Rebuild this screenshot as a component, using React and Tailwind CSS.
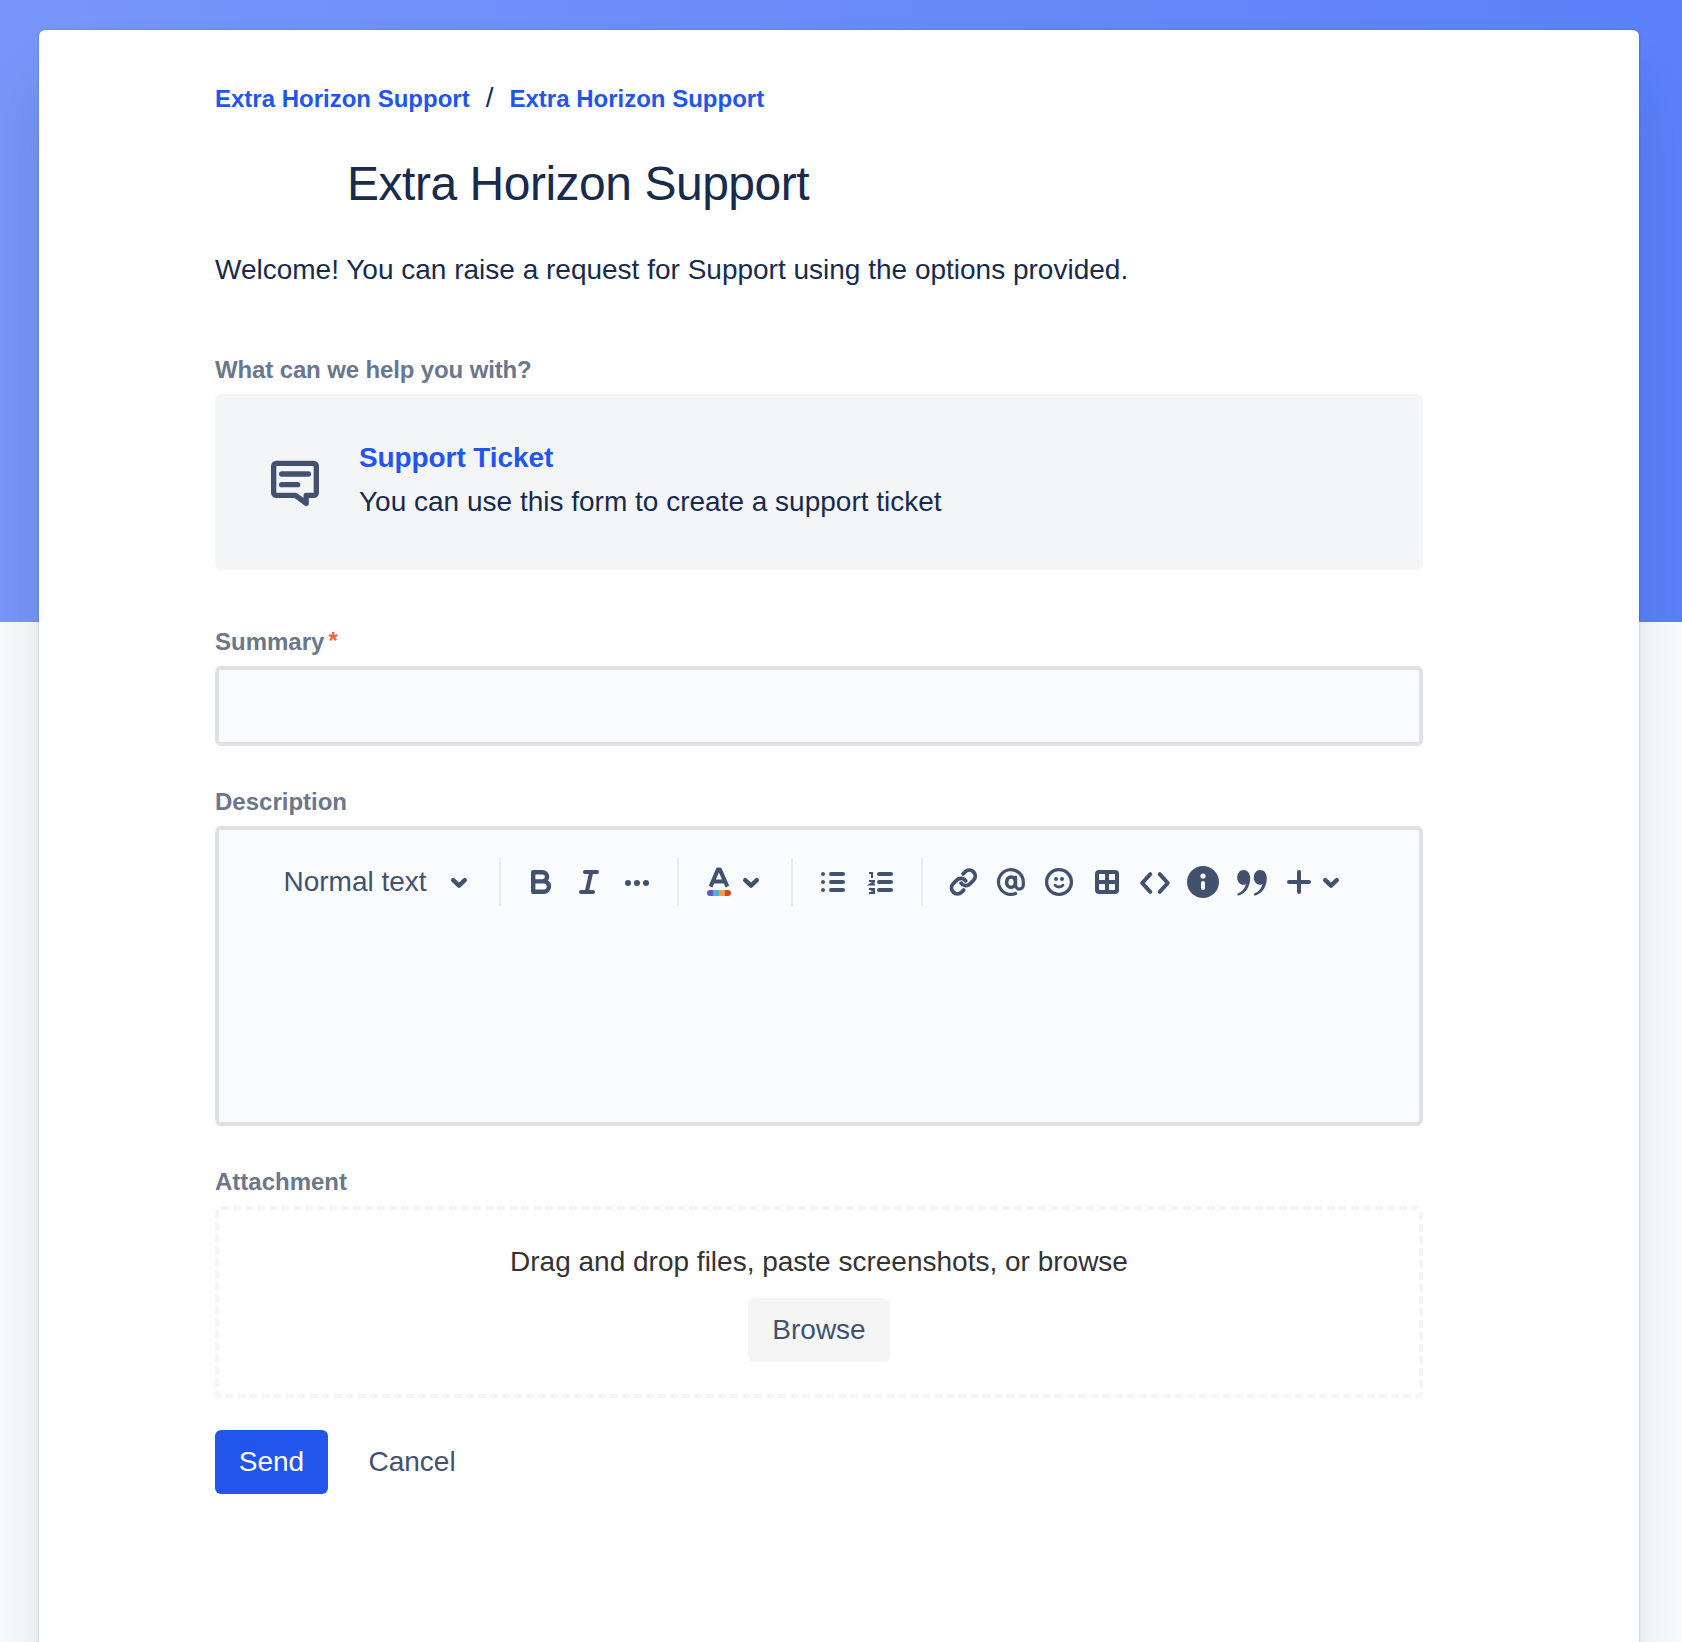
function Icon({ children, className = "w-12" }) {
  return (
    <svg viewBox="0 0 48 48" className={`h-12 shrink-0 ${className}`} fill="none" stroke="#42526E" strokeWidth="4" strokeLinecap="round" strokeLinejoin="round">
      {children}
    </svg>
  );
}

function Chevron() {
  return (
    <Icon>
      <path d="M18.2 22.2L24 27.6L29.8 22.2" strokeWidth="4.4" />
    </Icon>
  );
}

function SmallChevron() {
  return (
    <svg viewBox="8 0 32 48" className="-ml-2 mr-2 h-12 w-8 shrink-0" fill="none" stroke="#42526E" strokeWidth="4.4" strokeLinecap="round" strokeLinejoin="round">
      <path d="M18.2 22.2L24 27.6L29.8 22.2" />
    </svg>
  );
}

function Divider() {
  return <div className="mx-4 h-12 w-0.5 shrink-0 bg-[#EBECF0]" />;
}

function Label({ children, className = "" }) {
  return <div className={`mb-2 h-8 text-2xl leading-8 font-bold text-[#6B778C] ${className}`}>{children}</div>;
}

const QUOTE = "M16.4 12c4.2 0 6.8 3.4 6.8 8.2 0 8.6-5 15.4-11.4 17.2-1.7.4-2.1-1.5-.6-2.1 4.2-1.8 6.8-5 7.7-9-.8.3-1.7.5-2.5.5-3.6 0-6.2-3.2-6.2-7.3 0-4.3 2.7-7.5 6.2-7.5z";

function Toolbar() {
  return (
    <div className="flex h-12 items-center">
      <div className="w-[151.5px] shrink-0 whitespace-nowrap text-[28px] leading-10 text-[#42526E]">Normal text</div>
      <Chevron />
      <Divider />
      <Icon>
        <path d="M16.2 14.2H25.5a4.6 4.6 0 0 1 0 9.2H16.2M25.5 23.4h1.2a5.2 5.2 0 0 1 0 10.4H16.2V14.2" strokeWidth="4.4" />
      </Icon>
      <Icon>
        <path d="M20 14H32M16 34H28M26.3 14L21.7 34" />
      </Icon>
      <Icon>
        <g fill="#42526E" stroke="none">
          <circle cx="15" cy="25" r="3" />
          <circle cx="24" cy="25" r="3" />
          <circle cx="33" cy="25" r="3" />
        </g>
      </Icon>
      <Divider />
      <Icon>
        <path d="M15.6 28.600L22.900 11.600h2L32.400 28.600M18.500 23.600H29.500" strokeWidth="4" strokeLinecap="butt" />
        <g stroke="none">
          <path d="M18 32H15a3 3 0 0 0 0 6h3z" fill="#6554C0" />
          <rect x="18" y="32" width="6" height="6" fill="#4FB3D9" />
          <rect x="24" y="32" width="6" height="6" fill="#F2A03D" />
          <path d="M30 32h3a3 3 0 0 1 0 6h-3z" fill="#D04A22" />
        </g>
      </Icon>
      <SmallChevron />
      <Divider />
      <Icon>
        <path d="M22 16H34M22 24H34M22 32H34" />
        <g fill="#42526E" stroke="none">
          <circle cx="14" cy="16" r="2" />
          <circle cx="14" cy="24" r="2" />
          <circle cx="14" cy="32" r="2" />
        </g>
      </Icon>
      <Icon>
        <path d="M22 16H34M22 24H34M22 32H34" />
        <path d="M12 15h3v5M12 23h5v.8l-4 2.8h5M12 31h5v1.5h-3M17 32.5v2.500h-5" strokeWidth="2" strokeLinecap="butt" strokeLinejoin="miter" />
      </Icon>
      <Divider />
      <Icon>
        <g transform="translate(10.1 9.7) scale(1.19)" strokeWidth="3.2">
          <path d="M10 13a5 5 0 0 0 7.54.54l3-3a5 5 0 0 0-7.07-7.07l-1.72 1.71" />
          <path d="M14 11a5 5 0 0 0-7.54-.54l-3 3a5 5 0 0 0 7.07 7.07l1.71-1.71" />
        </g>
      </Icon>
      <Icon>
        <ellipse cx="24" cy="24.2" rx="4.4" ry="5.2" strokeWidth="3.6" />
        <path d="M28.600 19V27.200a3.800 3.800 0 0 0 7.700 0V24A12.400 12.400 0 1 0 28.600 35.500" strokeWidth="3.200" />
      </Icon>
      <Icon>
        <circle cx="24" cy="24" r="12.4" strokeWidth="3.3" />
        <path d="M20 27.2c1.8 2.4 6.2 2.4 8 0" strokeWidth="2.8" />
        <g fill="#42526E" stroke="none">
          <circle cx="21" cy="21" r="2" />
          <circle cx="27" cy="21" r="2" />
        </g>
      </Icon>
      <Icon>
        <path d="M16 12h16a4 4 0 0 1 4 4v16a4 4 0 0 1-4 4H16a4 4 0 0 1-4-4V16a4 4 0 0 1 4-4zM16 16v6h6v-6zM26 16v6h6v-6zM16 26v6h6v-6zM26 26v6h6v-6z" fill="#42526E" stroke="none" fillRule="evenodd" />
      </Icon>
      <Icon>
        <path d="M19.3 16.2L11.2 25L19.3 33.8M28.7 16.2L36.8 25L28.7 33.8" />
      </Icon>
      <Icon>
        <circle cx="24" cy="24" r="16" fill="#42526E" stroke="none" />
        <circle cx="24" cy="18" r="2.6" fill="#FAFBFC" stroke="none" />
        <path d="M24 25V30" stroke="#FAFBFC" />
      </Icon>
      <Icon>
        <g fill="#42526E" stroke="none">
          <path d={QUOTE} />
          <path d={QUOTE} transform="translate(16.6 0)" />
        </g>
      </Icon>
      <Icon>
        <path d="M24 14V34M14 24H34" />
      </Icon>
      <SmallChevron />
    </div>
  );
}

export default function App() {
  return (
    <div className="relative h-[1642px] overflow-hidden bg-[#FAFBFC] font-['Liberation_Sans',Arial,sans-serif] text-[#172B4D]">
      <div className="absolute inset-x-0 top-0 h-[622px] bg-linear-to-r from-[#7896FA] to-[#5B80F8]" />
      <main className="relative mt-[30px] ml-[39px] h-[1800px] w-[1600px] rounded-md bg-white pt-[52px] pl-44 shadow-[0_40px_64px_-16px_rgba(9,30,66,0.2),0_0_2px_rgba(9,30,66,0.3)]">
        <div className="w-[1208px]">
          <nav className="flex h-8 items-baseline gap-4 text-2xl leading-8 font-bold whitespace-nowrap text-[#2255EC]">
            <a>Extra Horizon Support</a>
            <span className="text-[28px] font-normal text-[#172B4D]">/</span>
            <a>Extra Horizon Support</a>
          </nav>
          <h1 className="mt-[42px] ml-[132px] text-5xl leading-[56px] tracking-[-0.01em]">Extra Horizon Support</h1>
          <p className="mt-[38px] text-[28px] leading-10">Welcome! You can raise a request for Support using the options provided.</p>

          <Label className="mt-16 tracking-[-0.13px]">What can we help you with?</Label>
          <div className="flex h-44 items-center rounded-md bg-[#F4F5F7] pl-12">
            <svg viewBox="0 0 24 24" className="h-16 w-16 shrink-0" fill="none" stroke="#42526E" strokeWidth="2" strokeLinecap="round" strokeLinejoin="round">
              <path d="M5 5H19a1 1 0 0 1 1 1V16a1 1 0 0 1-1 1H16.2V20L12.2 17H5a1 1 0 0 1-1-1V6a1 1 0 0 1 1-1z" />
              <path d="M7 9H17M7 13H13" />
            </svg>
            <div className="-mt-1 ml-8">
              <div className="h-11 text-[28px] leading-10 font-bold tracking-[-0.1px] text-[#2255EC]">Support Ticket</div>
              <div className="text-[28px] leading-10">You can use this form to create a support ticket</div>
            </div>
          </div>

          <Label className="mt-14 flex">
            Summary<span className="-mt-px pl-1 text-[#EC6337]">*</span>
          </Label>
          <div className="h-20 rounded-md border-4 border-[#DFE1E6] bg-[#FAFBFC]" />

          <Label className="mt-10">Description</Label>
          <div className="h-[300px] rounded-md border-4 border-[#DFE1E6] bg-[#FAFBFC] pt-7 pl-[64.5px]">
            <Toolbar />
          </div>

          <Label className="mt-10">Attachment</Label>
          <div className="flex h-48 flex-col items-center rounded-md border-4 border-dashed border-[#F4F5F7] pt-8">
            <div className="text-[28px] leading-10 text-[#333333]">Drag and drop files, paste screenshots, or browse</div>
            <button className="mt-4 h-16 w-[142px] rounded-md bg-[#F5F5F5] text-[28px] leading-[64px] text-[#42526E]">Browse</button>
          </div>

          <div className="mt-8 flex gap-[16.5px] text-[28px] leading-[64px]">
            <button className="h-16 w-[113px] rounded-md bg-[#2255EC] text-white">Send</button>
            <button className="h-16 px-6 text-[#42526E]">Cancel</button>
          </div>
        </div>
      </main>
    </div>
  );
}
